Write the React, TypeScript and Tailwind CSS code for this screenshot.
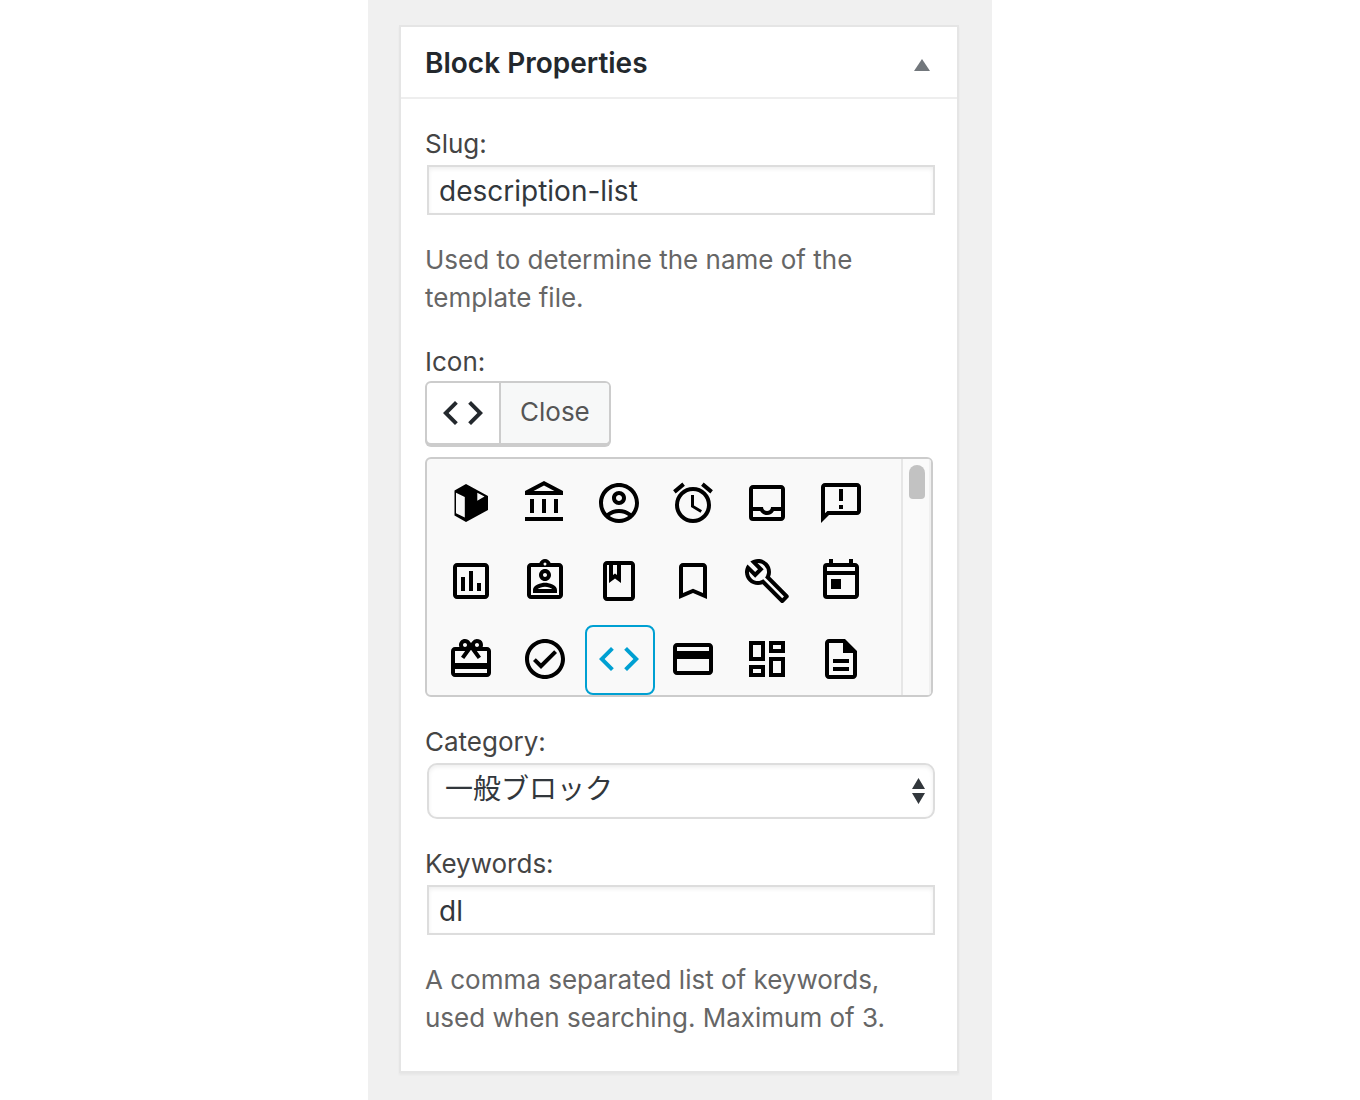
import { useState } from 'react';
import type { ReactNode } from 'react';
import {
  MdCode,
  MdOutlineAccountBalance,
  MdOutlineAccountCircle,
  MdOutlineAlarm,
  MdOutlineAnnouncement,
  MdOutlineAssessment,
  MdOutlineAssignmentInd,
  MdOutlineBook,
  MdOutlineBookmarkBorder,
  MdOutlineBuild,
  MdOutlineCardGiftcard,
  MdOutlineCheckCircle,
  MdOutlineCreditCard,
  MdOutlineDashboard,
  MdOutlineInbox,
  MdOutlineToday,
} from 'react-icons/md';

function BlockIcon() {
  return (
    <svg viewBox="0 0 48 48" fill="currentColor" fillRule="evenodd" className="size-12">
      <path d="M19 5 7.500 11.500V36.500L19 43l22-12V17zM9 13.800l8.800 4.200v20.500l-8.800-4.200zM30.300 13.700l7.200 3.900-7.200 4.200z" />
    </svg>
  );
}

function DescriptionIcon() {
  return (
    <svg viewBox="0 0 24 24" fill="currentColor" className="size-12">
      <path d="M8 16h8v2H8zm0-4h8v2H8zm6-10H6c-1.100 0-2 .9-2 2v16c0 1.100.89 2 1.990 2H18c1.100 0 2-.9 2-2V8l-6-6zm4 18H6V4h7v5h5v11z" />
    </svg>
  );
}

const icons: { name: string; icon: ReactNode }[] = [
  { name: 'block', icon: <BlockIcon /> },
  { name: 'account balance', icon: <MdOutlineAccountBalance className="size-12" /> },
  { name: 'account circle', icon: <MdOutlineAccountCircle className="size-12" /> },
  { name: 'alarm', icon: <MdOutlineAlarm className="size-12" /> },
  { name: 'inbox', icon: <MdOutlineInbox className="size-12" /> },
  { name: 'announcement', icon: <MdOutlineAnnouncement className="size-12" /> },
  { name: 'assessment', icon: <MdOutlineAssessment className="size-12" /> },
  { name: 'assignment', icon: <MdOutlineAssignmentInd className="size-12" /> },
  { name: 'book', icon: <MdOutlineBook className="size-12" /> },
  { name: 'bookmark', icon: <MdOutlineBookmarkBorder className="size-12" /> },
  { name: 'build', icon: <MdOutlineBuild className="size-12" /> },
  { name: 'today', icon: <MdOutlineToday className="size-12" /> },
  { name: 'gift card', icon: <MdOutlineCardGiftcard className="size-12" /> },
  { name: 'check', icon: <MdOutlineCheckCircle className="size-12" /> },
  { name: 'code', icon: <MdCode className="size-12" /> },
  { name: 'credit card', icon: <MdOutlineCreditCard className="size-12" /> },
  { name: 'dashboard', icon: <MdOutlineDashboard className="size-12" /> },
  { name: 'description', icon: <DescriptionIcon /> },
];

const labelClass = 'block text-[26px] leading-[38px] text-[#444]';
const inputClass =
  'block w-full h-[50px] px-[10px] pt-0.5 border-2 border-[#ddd] bg-white text-[28px] text-[#32373c] shadow-[inset_0_2px_4px_rgba(0,0,0,0.07)] outline-none';
const helpClass = 'mt-[26px] text-[26px] leading-[38px] text-[#666]';

export default function App() {
  const [selected, setSelected] = useState('code');
  const current = icons.find((item) => item.name === selected);

  return (
    <main className="min-h-screen bg-white font-['Inter','Noto_Sans_CJK_JP',sans-serif]">
      <aside className="w-full max-w-[624px] min-h-screen mx-auto pt-[25px] pb-[27px] pl-[31px] pr-[33px] bg-[#f0f0f0]">
        <section className="border-2 border-[#e5e5e5] bg-white shadow-[0_2px_2px_rgba(0,0,0,0.04)]">
          <header className="flex items-center justify-between h-[72px] pt-0.5 pl-6 pr-[27px] border-b-2 border-[#eee]">
            <h2 className="text-[28px] leading-[38px] font-semibold text-[#23282d]">Block Properties</h2>
            <button type="button" aria-label="Toggle panel" className="pt-1 text-[#72777c]">
              <svg viewBox="0 0 16 12" fill="currentColor" className="w-4 h-3">
                <path d="M8 0l8 12H0z" />
              </svg>
            </button>
          </header>

          <div className="flex flex-col gap-[26px] px-6 pt-[26px] pb-[34px]">
            <div>
              <label htmlFor="slug" className={labelClass}>Slug:</label>
              <div className="mt-0.5 ml-0.5 -mr-0.5">
                <input id="slug" type="text" defaultValue="description-list" className={inputClass} />
              </div>
              <p className={helpClass}>
                Used to determine the name of the template file.
              </p>
            </div>

            <div>
              <span className={labelClass}>Icon:</span>
              <div className="flex w-fit h-16 mb-3 border-2 border-[#ccc] rounded-md bg-white shadow-[0_2px_0_#ccc] overflow-hidden">
                <span className="flex items-center px-3 text-[#23282d]">{current?.icon}</span>
                <button type="button" className="px-[19px] pb-1 border-l-2 border-[#ccc] bg-[#f7f8f8] text-[26px] text-[#555]">
                  Close
                </button>
              </div>

              {/* Icon picker */}
              <div className="flex h-60 border-2 border-[#ccc] rounded-md bg-[#f9f9f9] overflow-hidden">
                <div className="flex-1 flex flex-wrap content-start gap-x-1 gap-y-2 p-[10px]">
                  {icons.map(({ name, icon }) => (
                    <button
                      key={name}
                      type="button"
                      aria-label={name}
                      aria-pressed={name === selected}
                      onClick={() => setSelected(name)}
                      className={`flex items-start size-[70px] p-2 border-2 rounded-lg ${
                        name === selected ? 'border-[#00a0d2] text-[#00a0d2]' : 'border-transparent text-black'
                      }`}
                    >
                      {icon}
                    </button>
                  ))}
                </div>
                <div className="w-[30px] pt-1.5 pl-1.5 border-l-2 border-r-2 border-l-[#e6e6e6] border-r-[#f0f0f0] bg-[#fafafa]">
                  <div className="w-4 h-[34px] rounded-t-[8px] rounded-b-[4px] bg-[#c2c2c2]" />
                </div>
              </div>
            </div>

            <div>
              <label htmlFor="category" className={labelClass}>Category:</label>
              <div className="relative mt-0.5 ml-0.5 -mr-0.5">
                <select
                  id="category"
                  className="block w-full h-14 pl-4 pr-10 pb-2 appearance-none border-2 border-[#ddd] rounded-[10px] bg-white text-[28px] text-[#32373c] font-['Noto_Sans_CJK_JP',sans-serif] shadow-[inset_0_2px_4px_rgba(0,0,0,0.07)] outline-none"
                >
                  <option>一般ブロック</option>
                </select>
                <svg
                  viewBox="0 0 13 26"
                  fill="#32373c"
                  className="absolute right-[10px] top-[15px] w-[13px] h-[26px] pointer-events-none"
                >
                  <path d="M6.500 0L13 11H0zM0 15h13L6.500 26z" />
                </svg>
              </div>
            </div>

            <div>
              <label htmlFor="keywords" className={labelClass}>Keywords:</label>
              <div className="mt-0.5 ml-0.5 -mr-0.5">
                <input id="keywords" type="text" defaultValue="dl" className={inputClass} />
              </div>
              <p className={helpClass}>
                A comma separated list of keywords, used when searching. Maximum of 3.
              </p>
            </div>
          </div>
        </section>
      </aside>
    </main>
  );
}
